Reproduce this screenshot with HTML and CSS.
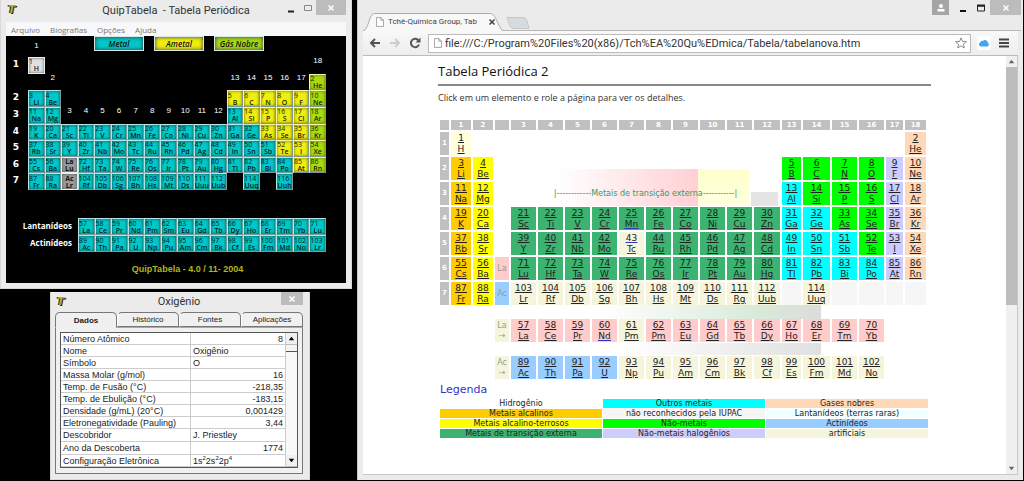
FILE: index.html
```html
<!DOCTYPE html>
<html lang="pt-BR">
<head>
<meta charset="utf-8">
<title>QuipTabela - Tabela Periódica</title>
<link rel="stylesheet" href="styles.css">
</head>
<body>
<div class="desktop">
  <div class="left-side">
    <section class="window quip">
      <header class="titlebar">
        <span class="app-icon">T</span>
        <h1 class="win-title">QuipTabela &nbsp;- Tabela Periódica</h1>
        <div class="controls">
          <button class="ctl" aria-label="Minimizar"><svg viewBox="0 0 10 10"><path d="M2 8.500h6" stroke="#222" stroke-width="2"/></svg></button>
          <button class="ctl" aria-label="Maximizar"><svg viewBox="0 0 10 10"><path d="M1.500 2.500h7v5h-7z" fill="none" stroke="#888"/></svg></button>
          <button class="ctl close" aria-label="Fechar"><svg viewBox="0 0 10 10"><path d="M2.500 2.500l5 5m0-5l-5 5" stroke="#fff" stroke-width="1.500"/></svg></button>
        </div>
      </header>
      <nav class="menubar"><button>Arquivo</button><button>Biografias</button><button>Opções</button><button>Ajuda</button></nav>
      <main class="board">
        <div class="board-top">
          <span class="group-one">1</span>
          <div class="kinds"><button class="kind metal">Metal</button><button class="kind ametal">Ametal</button><button class="kind nobre">Gás Nobre</button></div>
        </div>
        <div class="main-block" id="mainBlock"></div>
        <div class="f-block" id="fBlock"></div>
        <p class="version">QuipTabela - 4.0 / 11- 2004</p>
      </main>
    </section>

    <section class="window details">
      <header class="titlebar">
        <span class="app-icon">T</span>
        <h2 class="win-title">Oxigênio</h2>
        <div class="controls"><button class="ctl close" aria-label="Fechar"><svg viewBox="0 0 10 10"><path d="M2.500 2.500l5 5m0-5l-5 5" stroke="#fff" stroke-width="1.500"/></svg></button></div>
      </header>
      <div class="tabs" role="tablist">
        <button role="tab" class="tab active" aria-selected="true">Dados</button><button role="tab" class="tab">Histórico</button><button role="tab" class="tab">Fontes</button><button role="tab" class="tab">Aplicações</button>
      </div>
      <div class="tab-page">
        <div class="data-box">
          <table class="data">
            <tr><th scope="row">Número Atômico</th><td class="num">8</td></tr>
            <tr><th scope="row">Nome</th><td>Oxigênio</td></tr>
            <tr><th scope="row">Símbolo</th><td>O</td></tr>
            <tr><th scope="row">Massa Molar (g/mol)</th><td class="num">16</td></tr>
            <tr><th scope="row">Temp. de Fusão (°C)</th><td class="num">-218,35</td></tr>
            <tr><th scope="row">Temp. de Ebulição (°C)</th><td class="num">-183,15</td></tr>
            <tr><th scope="row">Densidade (g/mL) (20°C)</th><td class="num">0,001429</td></tr>
            <tr><th scope="row">Eletronegatividade (Pauling)</th><td class="num">3,44</td></tr>
            <tr class="tall"><th scope="row">Descobridor</th><td>J. Priestley</td></tr>
            <tr class="tall"><th scope="row">Ano da Descoberta</th><td class="num">1774</td></tr>
            <tr><th scope="row">Configuração Eletrônica</th><td>1s<sup>2</sup>2s<sup>2</sup>2p<sup>4</sup></td></tr>
          </table>
          <div class="scroll">
            <button aria-label="Subir"><svg viewBox="0 0 10 10"><path d="M2.500 6.500l2.500-3 2.500 3z"/></svg></button>
            <span class="scroll-thumb"></span>
            <span class="scroll-track"></span>
            <button aria-label="Descer"><svg viewBox="0 0 10 10"><path d="M2.500 3.500l2.500 3 2.500-3z"/></svg></button>
          </div>
        </div>
      </div>
    </section>
  </div>

  <section class="browser">
    <header class="tabstrip">
      <div class="page-tab">
        <svg class="tab-shape" viewBox="0 0 150 18" preserveAspectRatio="none"><path d="M0 18C6 17 6 1 12 .5H134C140 1 142 17 148 18" fill="#f8f8f8" stroke="#aaa"/></svg>
        <svg class="doc" viewBox="0 0 9 11"><path d="M.5 .5h5l3 3v7h-8zM5.500 .5v3h3" fill="#fff" stroke="#999"/></svg>
        <span class="page-name">Tchê-Química Group, Tab</span>
        <button class="tab-close" aria-label="Fechar guia"><svg viewBox="0 0 8 8"><path d="M1.500 1.500l5 5m0-5l-5 5" stroke="#444" stroke-width="1.500"/></svg></button>
      </div>
      <button class="new-tab" aria-label="Nova guia"><svg viewBox="0 0 24 12"><path d="M1 .5H17Q20 .5 21 4L23 11.500H8Q5 11.500 4 9z" fill="#d5dbdf" stroke="#c4c8cb"/></svg></button>
      <div class="controls">
        <button class="ctl user" aria-label="Usuário"><svg viewBox="0 0 10 10"><circle cx="5" cy="3" r="2" fill="#fff"/><path d="M1.500 8.500V6h7v2.500z" fill="#fff"/></svg></button>
        <button class="ctl" aria-label="Minimizar"><svg viewBox="0 0 10 10"><path d="M2 8h6" stroke="#111" stroke-width="2"/></svg></button>
        <button class="ctl" aria-label="Maximizar"><svg viewBox="0 0 10 10"><path d="M1.500 3h7v5h-7z" fill="none" stroke="#222"/><path d="M1 2.500h8" stroke="#222" stroke-width="2"/></svg></button>
        <button class="ctl close" aria-label="Fechar"><svg viewBox="0 0 10 10"><path d="M2.500 2.500l5 5m0-5l-5 5" stroke="#fff" stroke-width="1.500"/></svg></button>
      </div>
    </header>
    <div class="toolbar">
      <button class="tool" aria-label="Voltar"><svg viewBox="0 0 12 12"><path d="M11 6H2M6 2L2 6l4 4" fill="none" stroke="#555" stroke-width="2"/></svg></button>
      <button class="tool" aria-label="Avançar"><svg viewBox="0 0 12 12"><path d="M1 6h9M6 2l4 4-4 4" fill="none" stroke="#ccc" stroke-width="2"/></svg></button>
      <button class="tool" aria-label="Recarregar"><svg viewBox="0 0 12 12"><path d="M9.500 3.500A4.200 4.200 0 1 0 10 7.500" fill="none" stroke="#555" stroke-width="2"/><path d="M11.500 .5V5.500H6.500z" fill="#555"/></svg></button>
      <div class="omnibox">
        <svg class="doc" viewBox="0 0 9 11"><path d="M.5 .5h5l3 3v7h-8zM5.500 .5v3h3" fill="#fff" stroke="#999"/></svg>
        <input class="url" aria-label="Endereço" value="file:///C:/Program%20Files%20(x86)/Tch%EA%20Qu%EDmica/Tabela/tabelanova.htm">
        <button class="tool" aria-label="Favorito"><svg viewBox="0 0 14 14"><path d="M7 1l1.700 4.200 4.500.3-3.500 2.900 1.200 4.400L7 10.400l-3.900 2.400 1.200-4.400L.8 5.500l4.500-.3z" fill="#fff" stroke="#777"/></svg></button>
      </div>
      <button class="tool cloud" aria-label="iCloud"><svg viewBox="0 0 12 12"><path d="M3 9.500a2.200 2.200 0 0 1-.5-4.300A2 2 0 0 1 5 4a2.800 2.800 0 0 1 4.800 1.800A2 2 0 0 1 9.500 9.500z" fill="#43a4f0"/></svg></button>
      <button class="tool" aria-label="Menu"><svg viewBox="0 0 12 12"><path d="M1 2.500h10M1 6h10M1 9.500h10" stroke="#444" stroke-width="2"/></svg></button>
    </div>
    <div class="viewport">
      <article class="page">
        <h2 class="page-title">Tabela Periódica 2</h2>
        <p class="hint">Click em um elemento e role a página para ver os detalhes.</p>
        <table class="periodic" id="periodic"></table>
        <h3 class="legend-title">Legenda</h3>
        <table class="legend">
          <tr><td>Hidrogênio</td><td class="outros">Outros metais</td><td class="gases">Gases nobres</td></tr>
          <tr><td class="alcalino">Metais alcalinos</td><td class="iupac">não reconhecidos pela IUPAC</td><td class="terras">Lantanídeos (terras raras)</td></tr>
          <tr><td class="terroso">Metais alcalino-terrosos</td><td class="naometal">Não-metais</td><td class="actinideo">Actinídeos</td></tr>
          <tr><td class="transicao">Metais de transição externa</td><td class="halogenio">Não-metais halogênios</td><td class="artificial">artificiais</td></tr>
        </table>
      </article>
      <div class="page-scroll">
        <button aria-label="Subir"><svg viewBox="0 0 10 10"><path d="M2.500 6.500l2.500-3 2.500 3z"/></svg></button>
        <span class="page-thumb"></span>
        <button aria-label="Descer"><svg viewBox="0 0 10 10"><path d="M2.500 3.500l2.500 3 2.500-3z"/></svg></button>
      </div>
    </div>
  </section>
</div>
<script src="app.js"></script>
</body>
</html>
```

FILE: styles.css
```css
* { box-sizing: border-box; }
body { margin: 0; background: #000; color: #222; font-family: "Open Sans", sans-serif; }
h1, h2, h3, p { margin: 0; font-weight: normal; }
button { border: 0; padding: 0; margin: 0; background: none; color: inherit; font: inherit; }
svg { display: block; }
table { border-collapse: separate; }

.desktop { display: grid; grid-template-columns: 352px minmax(0, 1fr); column-gap: 5px; min-height: 100vh; padding: 0 1px 2px 0; }
.left-side { display: flex; flex-direction: column; align-items: flex-start; }

/* Windows */
.window { background: #ebebeb; border: 1px solid #d8d8d8; border-top: 0; }
.titlebar { display: grid; grid-template-columns: 64px 1fr 64px; align-items: start; }
.app-icon { padding-left: 2px; color: #b5b02a; font: italic bold 11px/20px "DejaVu Sans", sans-serif; text-shadow: 1px 1px 0 #222, -1px 0 0 #222; }
.win-title { text-align: center; white-space: nowrap; font-size: 11px; line-height: 22px; font-family: Roboto, sans-serif; color: #333; }
.controls { display: flex; justify-content: flex-end; }
.ctl { display: flex; justify-content: center; align-items: center; width: 18px; height: 15px; }
.ctl svg { width: 10px; height: 10px; }
.ctl.close { width: 31px; background: #bcbcbc; }

.quip { width: 100%; padding: 0 5px 5px; }
.menubar { display: flex; gap: 10px; height: 14px; padding-left: 5px; background: #f7f8fa; color: #777; font-size: 8px; line-height: 13px; }

.board { background: #000; color: #fff; padding: 0 20px 8px 0; }
.board-top { display: flex; height: 21px; padding-left: 22px; }
.group-one { flex: 0 0 17px; padding-top: 4px; text-align: center; font: 8px/12px "Liberation Sans", sans-serif; }
.kinds { display: flex; gap: 10px; margin-left: 49px; }
.kind { width: 50px; height: 15px; border: 1px solid #d8e8e8; color: #111; font-size: 8px; line-height: 12px; font-style: italic; font-weight: 600; box-shadow: inset 0 0 4px #333; }
.metal { background: #00c8c8; }
.ametal { background: #f0ee10; }
.nobre { background: #a8dc10; }
.neutro { background: #e0e0e0; }
.main-block { display: grid; grid-template-columns: 22px repeat(18, minmax(0, 1fr)); grid-template-rows: repeat(8, 1fr); height: 133px; }
.period { padding-right: 2px; text-align: center; font: bold 9px/15px "DejaVu Sans", sans-serif; }
.group { text-align: center; font: 8px/8px "Liberation Sans", sans-serif; }
.cell { display: flex; flex-direction: column; justify-content: center; min-width: 0; min-height: 0; border: 1px solid #b5e6e6; border-right-color: #7c9898; border-bottom-color: #7c9898; box-shadow: inset 0 0 3px #144; color: #022; font: 7px/7px "Open Sans", sans-serif; text-align: center; white-space: nowrap; }
.cell.ametal, .cell.nobre { border-top-color: #f5f5b0; border-left-color: #f5f5b0; box-shadow: inset 0 0 3px #660; color: #220; }
.cell.neutro { border-color: #eee; box-shadow: inset 0 0 3px #555; color: #111; }
.cell.series-mark { background: #999; font-weight: 700; }
.cell-no { text-align: left; }
.cell-sym { font-weight: 600; }
.f-block { display: grid; grid-template-columns: 72px repeat(15, minmax(0, 1fr)); grid-auto-rows: 17px; margin-top: 28px; }
.series { padding-right: 6px; text-align: right; font: bold 8px/16px "Open Sans", sans-serif; }
.version { padding: 11px 0 0 43px; text-align: center; color: #b4b41e; font: bold 9px/12px "Liberation Sans", sans-serif; }

.details { width: 260px; margin: 3px 0 0 50px; padding: 0 6px 5px 4px; }
.details .titlebar { grid-template-columns: 32px 1fr 32px; }
.details .win-title { line-height: 20px; }
.details .ctl.close { width: 22px; height: 13px; }
.tabs { display: grid; grid-template-columns: repeat(4, 1fr); }
.tab { height: 15px; border: 1px solid #777; border-left-color: #fff; border-radius: 5px 5px 0 0; background: #f0f0f0; color: #222; font: 8px/13px "Liberation Sans", sans-serif; }
.tab.active { height: 16px; margin-bottom: -1px; border-color: #777; border-bottom-color: #f0f0f0; font-weight: bold; }
.tab-page { padding: 4px 4px 5px; border: 1px solid #777; border-top-color: #aaa; background: #f0f0f0; }
.data-box { display: flex; border: 1px solid #555; background: #fff; }
.data { flex: 1; border-spacing: 0; font: 9px/10px "Liberation Sans", sans-serif; color: #222; }
.data th { width: 130px; font-weight: normal; text-align: left; border-right: 1px solid #ccc; }
.data th, .data td { height: 12px; padding: 0 2px; border-bottom: 1px solid #ccc; white-space: nowrap; }
.data .tall th, .data .tall td { height: 13px; }
.data .num { text-align: right; }
.data sup { font-size: 6px; line-height: 4px; }
.scroll { display: flex; flex-direction: column; width: 12px; background: #f0f0f0; border-left: 1px solid #ccc; }
.scroll button { height: 12px; border-bottom: 1px solid #bbb; }
.scroll-thumb { height: 7px; background: #f4f4f4; border-bottom: 1px solid #555; }
.scroll-track { flex: 1; background: #f8f8f8; }

/* Browser */
.browser { display: flex; flex-direction: column; background: #ebebeb; padding: 0 5px 5px; border-left: 1px solid #c8c8c8; }
.tabstrip { display: flex; height: 31px; border-bottom: 1px solid #b8b8b8; margin-right: -3px; }
.page-tab { position: relative; display: flex; align-items: center; gap: 4px; width: 143px; height: 18px; margin-top: 13px; padding: 0 10px 0 13px; }
.tab-shape { position: absolute; inset: 0; width: 100%; height: 100%; }
.doc { position: relative; flex: none; width: 8px; height: 10px; }
.page-name { position: relative; flex: 1; white-space: nowrap; font: 8px/12px Roboto, sans-serif; color: #444; }
.tab-close { position: relative; width: 8px; height: 8px; }
.new-tab { width: 24px; height: 12px; margin-top: 17px; }
.tabstrip .controls { margin-left: auto; }
.tabstrip .ctl.user { width: 17px; margin-right: 5px; background: #a5a5a5; }
.toolbar { display: flex; align-items: center; gap: 6px; height: 25px; padding: 0 7px 0 5px; border-bottom: 1px solid #bbb; background: linear-gradient(#f8f8f8, #ededed); }
.tool { flex: none; width: 14px; height: 14px; }
.tool svg { width: 12px; height: 12px; margin: auto; }
.omnibox { display: flex; flex: 1; align-items: center; gap: 3px; height: 19px; padding: 0 2px 0 5px; border: 1px solid #bbb; background: #fff; min-width: 0; }
.url { flex: 1; min-width: 0; height: 17px; padding: 0; border: 0; background: none; color: #333; font: 11px/17px Roboto, sans-serif; }
.cloud { background: #fff; border-radius: 3px; }
.viewport { display: flex; flex: 1; background: #fff; border: 1px solid #c8c8c8; border-top: 0; border-left: 0; }
.page { width: 493px; margin: 0 auto; }
.page-title { padding-top: 4px; padding-bottom: 2px; border-bottom: 2px solid #888; color: #111; font-size: 13px; line-height: 22px; }
.hint { padding: 4px 0 12px; font-size: 9px; line-height: 16px; color: #333; }
.page-scroll { display: flex; flex-direction: column; flex: none; width: 11px; background: #f0f0f0; }
.page-scroll button { height: 11px; }
.page-scroll path { fill: #666; }
.page-thumb { flex: 0 0 57%; margin-bottom: auto; background: #bcbcbc; }

.periodic {
  table-layout: fixed; border-spacing: 2px; font: 9px/11px "DejaVu Sans", sans-serif; text-align: center; color: #222;
  background-repeat: no-repeat;
  background-image: linear-gradient(90deg, #fff, #ffd0d4), linear-gradient(#ffffcc, #ffffe0), linear-gradient(#e4e4e4, #e4e4e4), linear-gradient(90deg, #fff, #d9ead9 70%, #dcdcdc), linear-gradient(90deg, #fff, #e0e0e0);
  background-size: 140px 37px, 52px 37px, 27px 14px, 220px 14px, 200px 12px;
  background-position: 120px 51px, 260px 51px, 313px 74px, 163px 187px, 183px 225px;
}
.periodic td, .periodic th { height: 23px; padding: 0; white-space: nowrap; }
.periodic .head th { height: 10px; font-size: 7px; line-height: 8px; }
.periodic th { background: #c0c0c0; color: #fff; font-size: 7px; }
.periodic a { display: block; color: #222; }
.periodic a.seen span { text-decoration-color: #33c; }
.periodic a span { display: block; text-decoration: underline; }
.periodic .gap td { height: 10px; }
.periodic .note { color: #3a9a62; font-size: 8px; }
.periodic .tag { color: #999; font-size: 8px; line-height: 10px; }
.c-w9 { width: 9px; } .c-w14 { width: 14px; } .c-w17 { width: 17px; } .c-w19 { width: 19px; } .c-w20 { width: 20px; }
.c-w21 { width: 21px; } .c-w25 { width: 25px; } .c-w26 { width: 26px; } .c-w27 { width: 27px; }

.hidrogenio { background: #ffffdd; }
.alcalino { background: #ffcc00; }
.terroso { background: #ffff00; }
.transicao { background: #3cb371; }
.outros { background: #00ffff; }
.naometal { background: #00ff00; }
.halogenio { background: #ccccff; }
.gases { background: #ffd8b8; }
.lantanideo { background: #ffcccc; }
.actinideo { background: #99ccff; }
.artificial { background: #f5f5dc; }
.vazio { background: #f6f6f6; }
.iupac { background: #f5f5f5; }
.terras { background: #f0ffff; }

.legend-title { padding-left: 2px; color: #33c; font: 11px/17px "DejaVu Sans", sans-serif; }
.legend { table-layout: fixed; width: 490px; margin-left: 1px; border-spacing: 1px; font: 8px/9px "DejaVu Sans", sans-serif; text-align: center; }
.legend td { padding: 0; white-space: nowrap; }
```

FILE: app.js
```js
const symbols = ("H He Li Be B C N O F Ne Na Mg Al Si P S Cl Ar K Ca Sc Ti V Cr Mn Fe Co Ni Cu Zn Ga Ge As Se Br Kr " +
  "Rb Sr Y Zr Nb Mo Tc Ru Rh Pd Ag Cd In Sn Sb Te I Xe Cs Ba La Ce Pr Nd Pm Sm Eu Gd Tb Dy Ho Er Tm Yb Lu " +
  "Hf Ta W Re Os Ir Pt Au Hg Tl Pb Bi Po At Rn Fr Ra Ac Th Pa U Np Pu Am Cm Bk Cf Es Fm Md No Lr " +
  "Rf Db Sg Bh Hs Mt Ds Uuu Uub Uut Uuq Uup Uuh").split(" ");
const range = (a, b) => Array.from({ length: b - a + 1 }, (_, i) => a + i);
const nobles = [2, 10, 18, 36, 54, 86];

/* QuipTabela board */
const board = document.getElementById("mainBlock");
function put(parent, tag, cls, row, col, html) {
  const el = document.createElement(tag);
  el.className = cls;
  el.style.gridArea = row + " / " + col;
  el.innerHTML = html;
  parent.append(el);
}
const ametals = [5, 6, 7, 8, 9, 14, 15, 16, 17, 33, 34, 35, 52, 53, 85];
function cell(parent, n, row, col) {
  const kind = n === 1 ? "neutro" : ametals.includes(n) ? "ametal" : nobles.includes(n) ? "nobre" : "metal";
  put(parent, "button", "cell " + kind, row, col, `<span class="cell-no">${n}</span><span class="cell-sym">${symbols[n - 1]}</span>`);
}
[1, 3, 4, 5, 6, 7, 8].forEach((row, i) => put(board, "span", "period", row, 1, i + 1));
put(board, "span", "group", 2, 3, 2);
range(3, 12).forEach(g => put(board, "span", "group", 4, g + 1, g));
range(13, 17).forEach(g => put(board, "span", "group", 2, g + 1, g));
put(board, "span", "group", 1, 19, 18);
cell(board, 1, 1, 2);
cell(board, 2, 2, 19);
[[3, 3], [11, 4]].forEach(([n, row]) => {
  cell(board, n, row, 2);
  cell(board, n + 1, row, 3);
  range(n + 2, n + 7).forEach((m, i) => cell(board, m, row, 14 + i));
});
range(19, 36).forEach((n, i) => cell(board, n, 5, 2 + i));
range(37, 54).forEach((n, i) => cell(board, n, 6, 2 + i));
[55, 56].forEach((n, i) => { cell(board, n, 7, 2 + i); cell(board, n + 32, 8, 2 + i); });
put(board, "button", "cell neutro series-mark", 7, 4, "<span>La</span><span>Lu</span>");
put(board, "button", "cell neutro series-mark", 8, 4, "<span>Ac</span><span>Lr</span>");
range(72, 86).forEach((n, i) => cell(board, n, 7, 5 + i));
range(104, 112).forEach((n, i) => cell(board, n, 8, 5 + i));
cell(board, 114, 8, 15);
cell(board, 116, 8, 17);

const fBlock = document.getElementById("fBlock");
put(fBlock, "span", "series", 1, 1, "Lantanídeos");
put(fBlock, "span", "series", 2, 1, "Actinídeos");
range(57, 71).forEach((n, i) => cell(fBlock, n, 1, 2 + i));
range(89, 103).forEach((n, i) => cell(fBlock, n, 2, 2 + i));

/* Web page table */
const families = {
  hidrogenio: [1], alcalino: [3, 11, 19, 37, 55, 87], terroso: [4, 12, 20, 38, 56, 88],
  artificial: [43, 61, ...range(93, 114)], transicao: [...range(21, 30), ...range(39, 48), ...range(71, 80)],
  outros: [13, 31, 32, 49, 50, 51, 81, 82, 83, 84], naometal: [5, 6, 7, 8, 14, 15, 16, 33, 34, 52],
  halogenio: [9, 17, 35, 53, 85], gases: nobles, lantanideo: range(57, 70), actinideo: range(89, 92)
};
const names = { 62: "Pm", 111: "Rg" };
function link(n) {
  const family = Object.keys(families).find(f => families[f].includes(n));
  const seen = [25, 43, 60].includes(n) ? ' class="seen"' : "";
  return `<td class="${family}"><a href="#e${n}"${seen}><span>${n}</span><span>${names[n] || symbols[n - 1]}</span></a></td>`;
}
const links = (a, b) => range(a, b).map(link).join("");
const blank = (n, cls = "") => n ? `<td colspan="${n}" class="${cls}"></td>` : "";
const note = '<td colspan="10" class="note">|------------Metais de transição externa-----------|</td>';
const row = (label, body) => `<tr><th scope="row">${label}</th>${body}</tr>`;
const widths = [9, 20, 20, 14, ...Array(9).fill(25), 26, 19, 27, 25, 25, 17, 21];
const empty = blank(1, "vazio");
document.getElementById("periodic").innerHTML =
  "<colgroup>" + widths.map(w => `<col class="c-w${w}">`).join("") + "</colgroup>" +
  '<tr class="head"><th></th><th>1</th><th>2</th><th></th>' + range(3, 18).map(g => `<th scope="col">${g}</th>`).join("") + "</tr>" +
  row(1, link(1) + blank(17) + link(2)) +
  row(2, links(3, 4) + blank(11) + links(5, 10)) +
  row(3, links(11, 12) + blank(1) + note + links(13, 18)) +
  row(4, links(19, 20) + blank(1) + links(21, 36)) +
  row(5, links(37, 38) + blank(1) + links(39, 54)) +
  row(6, links(55, 56) + '<td class="tag lantanideo">La</td>' + links(71, 86)) +
  row(7, links(87, 88) + '<td class="tag actinideo">Ac</td>' + links(103, 112) + empty + link(114) + empty.repeat(4)) +
  '<tr class="gap"><td colspan="20"></td></tr>' +
  "<tr>" + blank(3) + '<td class="tag artificial">La<br>→</td>' + links(57, 70) + blank(2) + "</tr>" +
  '<tr class="gap"><td colspan="20"></td></tr>' +
  "<tr>" + blank(3) + '<td class="tag artificial">Ac<br>→</td>' + links(89, 102) + blank(2) + "</tr>";
```
